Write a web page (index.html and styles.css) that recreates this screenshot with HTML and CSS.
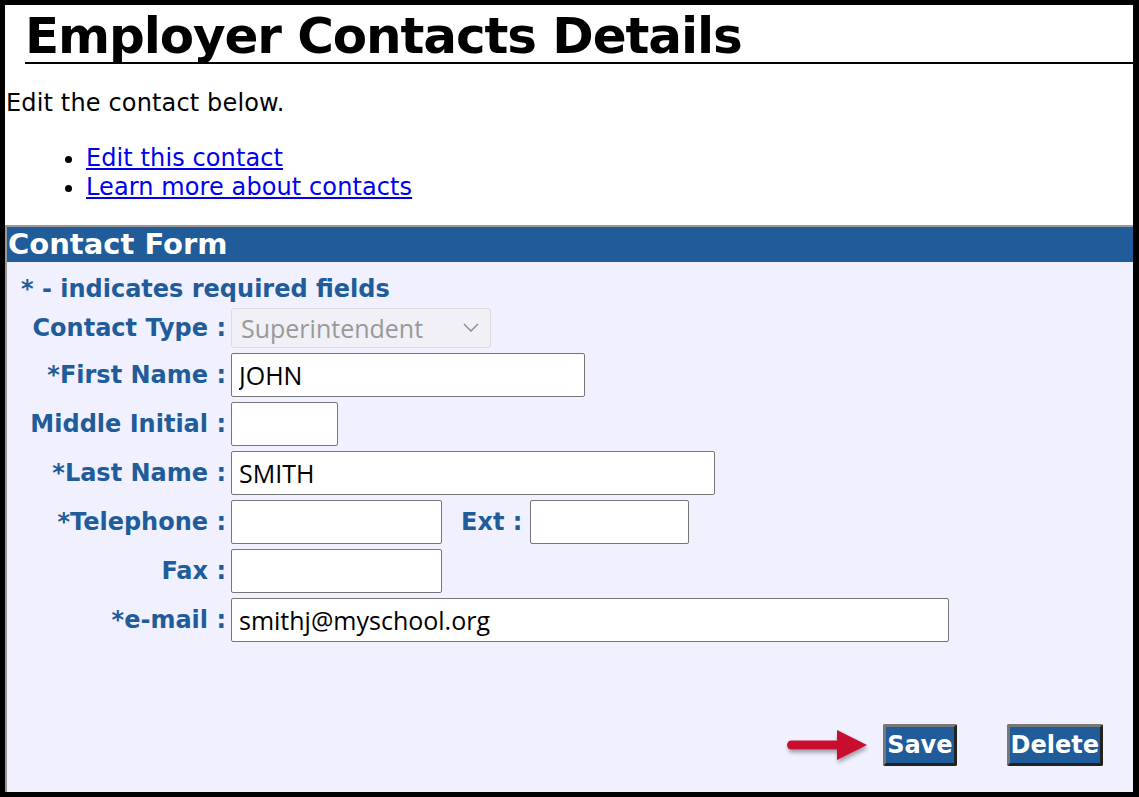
FILE: index.html
```html
<!DOCTYPE html>
<html>
<head>
<meta charset="utf-8">
<title>Employer Contacts Details</title>
<link rel="stylesheet" href="styles.css">
</head>
<body>
<div class="frame">
  <h1 class="title">Employer Contacts Details</h1>
  <p class="intro">Edit the contact below.</p>
  <ul class="links">
    <li><a href="#">Edit this contact</a></li>
    <li><a href="#">Learn more about contacts</a></li>
  </ul>
  <div class="panel">
    <div class="panel-head">Contact Form</div>
    <div class="req">* - indicates required fields</div>
    <div class="rows">
      <div class="row">
        <label class="lbl">Contact Type :</label>
        <div class="selwrap">
          <select class="sel" disabled><option>Superintendent</option></select>
          <svg class="chev" width="16" height="10" viewBox="0 0 16 10"><path d="M1 1 L8 8 L15 1" fill="none" stroke="#8a8a8a" stroke-width="1.4"/></svg>
        </div>
      </div>
      <div class="row">
        <label class="lbl">*First Name :</label>
        <input class="inp w-first" type="text" value="JOHN">
      </div>
      <div class="row">
        <label class="lbl">Middle Initial :</label>
        <input class="inp w-mid" type="text" value="">
      </div>
      <div class="row">
        <label class="lbl">*Last Name :</label>
        <input class="inp w-last" type="text" value="SMITH">
      </div>
      <div class="row">
        <label class="lbl">*Telephone :</label>
        <input class="inp w-tel" type="text" value="">
        <label class="lbl-ext">Ext :</label>
        <input class="inp w-ext" type="text" value="">
      </div>
      <div class="row">
        <label class="lbl">Fax :</label>
        <input class="inp w-tel" type="text" value="">
      </div>
      <div class="row">
        <label class="lbl">*e-mail :</label>
        <input class="inp w-mail" type="text" value="smithj@myschool.org">
      </div>
    </div>
    <div class="actions">
      <svg class="arrow" width="84" height="48" viewBox="0 0 84 48">
        <defs>
          <filter id="sh" x="-20%" y="-40%" width="140%" height="180%">
            <feDropShadow dx="1" dy="3" stdDeviation="2" flood-color="#000" flood-opacity="0.35"/>
          </filter>
        </defs>
        <g filter="url(#sh)">
          <line x1="6.5" y1="24" x2="54" y2="24" stroke="#c8102e" stroke-width="9" stroke-linecap="round"/>
          <polygon points="52,9 82,24 52,39" fill="#c8102e"/>
        </g>
      </svg>
      <button class="btn" type="button">Save</button>
      <button class="btn" type="button">Delete</button>
    </div>
  </div>
</div>
</body>
</html>
```
FILE: styles.css
```css
html, body {
  margin: 0;
  padding: 0;
  height: 100%;
}
body {
  font-family: "DejaVu Sans", Verdana, sans-serif;
  background: #000;
}
.frame {
  box-sizing: border-box;
  width: 1139px;
  height: 797px;
  border-style: solid;
  border-color: #000;
  border-width: 5px 6px 5px 5px;
  background: #fff;
  display: flex;
  flex-direction: column;
}
.title {
  margin: 6px 0 0 20px;
  font-size: 50px;
  line-height: 50px;
  letter-spacing: -1.1px;
  padding-bottom: 1px;
  font-weight: bold;
  color: #000;
  border-bottom: 2px solid #000;
}
.intro {
  margin: 25px 0 0 1px;
  font-size: 24px;
  line-height: 29px;
  letter-spacing: 0.15px;
  color: #000;
}
.links {
  margin: 26px 0 0 0;
  padding-left: 81px;
  font-size: 24px;
  line-height: 29px;
  letter-spacing: 0.1px;
}
.links a {
  color: #0000ee;
}
.panel {
  margin-top: 23px;
  flex: 1;
  background: #f0f0ff;
  border-top: 2px solid #999;
  border-left: 2px solid #999;
  display: flex;
  flex-direction: column;
}
.panel-head {
  background: #1f5c99;
  color: #fff;
  font-weight: bold;
  font-size: 29px;
  line-height: 35px;
  padding-left: 1px;
}
.req {
  color: #1f5c99;
  font-weight: bold;
  font-size: 24px;
  line-height: 28px;
  margin: 13px 0 0 14px;
}
.rows {
  display: flex;
  flex-direction: column;
  gap: 5px;
  margin-top: 5px;
}
.row {
  display: flex;
  align-items: center;
}
.lbl {
  width: 219px;
  text-align: right;
  color: #1f5c99;
  font-weight: bold;
  font-size: 24px;
  padding-right: 5px;
  box-sizing: content-box;
}
.lbl-ext {
  color: #1f5c99;
  font-weight: bold;
  font-size: 24px;
  margin-left: 19px;
  margin-right: 8px;
}
.selwrap {
  position: relative;
  width: 260px;
  height: 40px;
}
.sel {
  appearance: none;
  -webkit-appearance: none;
  box-sizing: border-box;
  width: 260px;
  height: 40px;
  border: 1px solid #dcdcdc;
  border-radius: 3px;
  background: #f0f0f6;
  color: #999;
  font-family: "Open Sans", "Noto Sans", sans-serif;
  font-size: 25px;
  padding: 0 0 0 9px;
  margin: 0;
  opacity: 1;
}
.chev {
  position: absolute;
  right: 12px;
  top: 15px;
}
.inp {
  box-sizing: border-box;
  height: 44px;
  border: 1px solid #767676;
  border-radius: 2px;
  background: #fff;
  font-family: "Open Sans", "Noto Sans", sans-serif;
  font-size: 25px;
  color: #000;
  padding: 0 7px;
  margin: 0;
}
.w-first { width: 354px; }
.w-mid { width: 107px; }
.w-last { width: 484px; }
.w-tel { width: 211px; }
.w-ext { width: 159px; }
.w-mail { width: 718px; }
.actions {
  margin-top: auto;
  display: flex;
  align-items: center;
  justify-content: flex-end;
  padding: 0 30px 23px 0;
}
.arrow {
  margin-right: 14px;
}
.btn {
  height: 42px;
  box-sizing: border-box;
  background: #1f5c99;
  color: #fff;
  font-family: "DejaVu Sans", Verdana, sans-serif;
  font-weight: bold;
  font-size: 24px;
  padding: 0 1px;
  border: 3px solid;
  border-color: #777 #222 #222 #777;
  border-radius: 2px;
  line-height: 34px;
}
.btn + .btn {
  margin-left: 50px;
}
```
